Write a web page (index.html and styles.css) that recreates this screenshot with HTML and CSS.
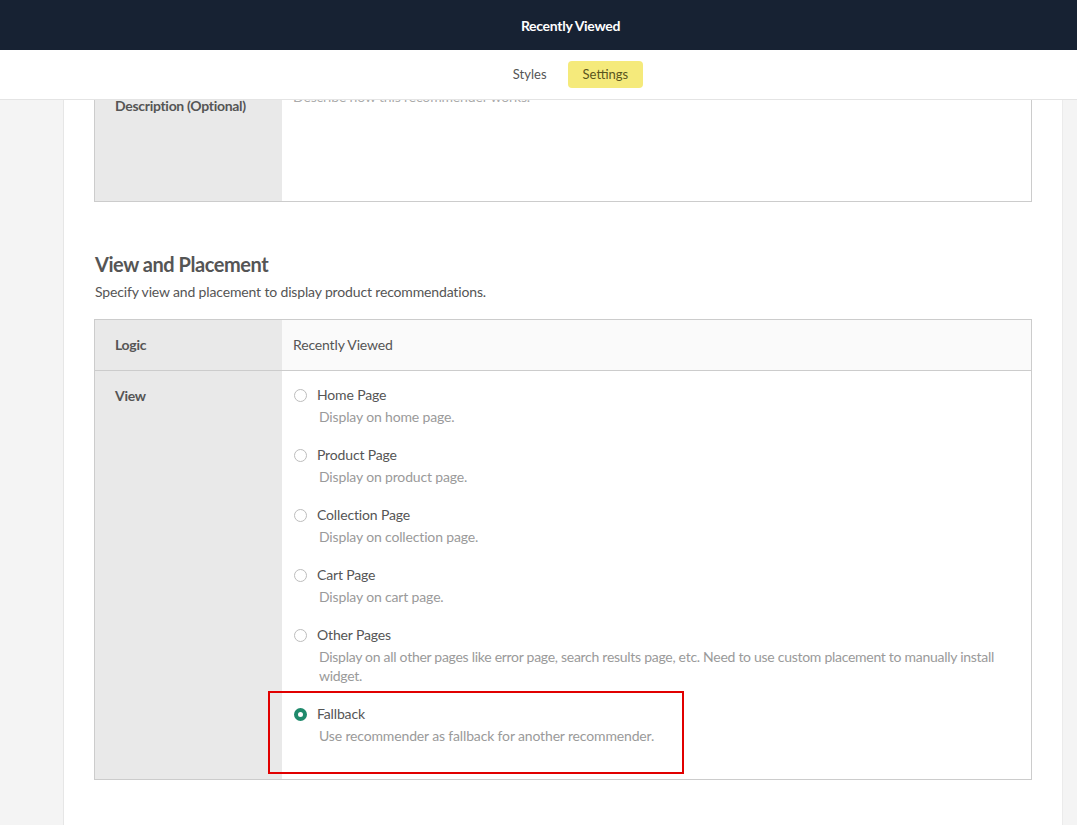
FILE: index.html
```html
<!DOCTYPE html>
<html>
<head>
<meta charset="utf-8">
<link rel="stylesheet" href="styles.css">
</head>
<body>
<div class="topbar"><span class="topbar-title">Recently Viewed</span></div>
<div class="tabs">
  <span class="tab">Styles</span>
  <span class="tab tab-active">Settings</span>
</div>
<div class="page">
  <div class="gutter-left"></div>
  <div class="main">
    <div class="table table-first">
      <div class="row row-desc">
        <div class="cell-label">Description (Optional)</div>
        <div class="cell-value cell-textarea"><span class="placeholder">Describe how this recommender works.</span></div>
      </div>
    </div>

    <h2 class="section-title">View and Placement</h2>
    <p class="section-sub">Specify view and placement to display product recommendations.</p>

    <div class="table">
      <div class="row row-logic">
        <div class="cell-label">Logic</div>
        <div class="cell-value cell-logic">Recently Viewed</div>
      </div>
      <div class="row row-view">
        <div class="cell-label">View</div>
        <div class="cell-value cell-options">
          <div class="option">
            <div class="option-head"><span class="radio"></span><span class="option-title">Home Page</span></div>
            <div class="option-desc">Display on home page.</div>
          </div>
          <div class="option">
            <div class="option-head"><span class="radio"></span><span class="option-title">Product Page</span></div>
            <div class="option-desc">Display on product page.</div>
          </div>
          <div class="option">
            <div class="option-head"><span class="radio"></span><span class="option-title">Collection Page</span></div>
            <div class="option-desc">Display on collection page.</div>
          </div>
          <div class="option">
            <div class="option-head"><span class="radio"></span><span class="option-title">Cart Page</span></div>
            <div class="option-desc">Display on cart page.</div>
          </div>
          <div class="option">
            <div class="option-head"><span class="radio"></span><span class="option-title">Other Pages</span></div>
            <div class="option-desc option-desc-long">Display on all other pages like error page, search results page, etc. Need to use custom placement to manually install widget.</div>
          </div>
          <div class="option option-last">
            <div class="highlight"></div>
            <div class="option-head"><span class="radio radio-checked"></span><span class="option-title">Fallback</span></div>
            <div class="option-desc">Use recommender as fallback for another recommender.</div>
          </div>
        </div>
      </div>
    </div>
  </div>
  <div class="gutter-right"></div>
</div>
</body>
</html>
```

FILE: styles.css
```css
* { box-sizing: border-box; }
html, body { margin: 0; padding: 0; }
body {
  font-family: Lato, "Open Sans", sans-serif;
  font-size: 14px;
  color: #555;
  width: 1077px;
  height: 825px;
  overflow: hidden;
  background: #fff;
  letter-spacing: -0.15px;
}
.topbar {
  height: 50px;
  background: #172233;
  display: flex;
  align-items: center;
  justify-content: center;
  padding-left: 64px;
}
.topbar-title {
  color: #fff;
  font-weight: 700;
  font-size: 14px;
  letter-spacing: -0.3px;
}
.tabs {
  height: 50px;
  border-bottom: 1px solid #e4e4e4;
  display: flex;
  align-items: center;
  justify-content: center;
  gap: 6px;
  padding-left: 64px;
}
.tab {
  font-size: 13px;
  line-height: 27px;
  height: 27px;
  padding: 0 15px;
  border-radius: 4px;
  color: #555;
  letter-spacing: 0;
}
.tab-active {
  background: #f5ea7b;
  color: #5a5520;
}
.page {
  display: flex;
  height: 725px;
}
.gutter-left {
  width: 64px;
  background: #f4f4f4;
  border-right: 1px solid #e6e6e6;
}
.gutter-right {
  width: 15px;
  background: #f4f4f4;
  border-left: 1px solid #ebebeb;
}
.main {
  flex: 1;
  padding: 0 30px;
  overflow: hidden;
}
.table {
  border: 1px solid #cccccc;
}
.table-first {
  margin-top: -20px;
}
.row {
  display: flex;
}
.row + .row {
  border-top: 1px solid #cccccc;
}
.cell-label {
  width: 187px;
  flex: none;
  background: #e9e9e9;
  padding: 15px 20px;
  line-height: 20px;
  font-weight: 700;
  color: #555;
  letter-spacing: -0.3px;
}
.cell-value {
  flex: 1;
  line-height: 20px;
}
.row-desc { height: 120px; }
.cell-textarea {
  padding: 6px 11px;
  background: #fff;
}
.placeholder { color: #aaa; }
.row-logic { height: 50px; }
.cell-logic {
  background: #fafafa;
  padding: 15px 11px;
  color: #555;
}
.cell-options {
  padding: 14px 6px 15px 12px;
  background: #fff;
}
.option {
  position: relative;
  margin-bottom: 19px;
}
.option-head {
  display: flex;
  align-items: center;
  height: 20px;
}
.radio {
  width: 13px;
  height: 13px;
  border-radius: 50%;
  border: 1px solid #bdbdbd;
  background: #fff;
  flex: none;
}
.radio-checked {
  border: 4px solid #1f8a6c;
}
.option-title {
  margin-left: 10px;
  color: #555;
}
.option-desc {
  margin-top: 2px;
  margin-left: 25px;
  line-height: 19px;
  color: #9a9a9a;
}
.option-desc-long {
  letter-spacing: -0.28px;
}
.highlight {
  position: absolute;
  top: -13px;
  left: -26px;
  width: 416px;
  height: 83px;
  border: 2px solid #e10000;
  pointer-events: none;
}
.section-title {
  margin: 49px 0 0 1px;
  font-size: 20px;
  line-height: 26px;
  font-weight: 700;
  color: #555;
  letter-spacing: -0.45px;
}
.section-sub {
  margin: 5px 0 17px 1px;
  line-height: 20px;
  color: #555;
}
```
